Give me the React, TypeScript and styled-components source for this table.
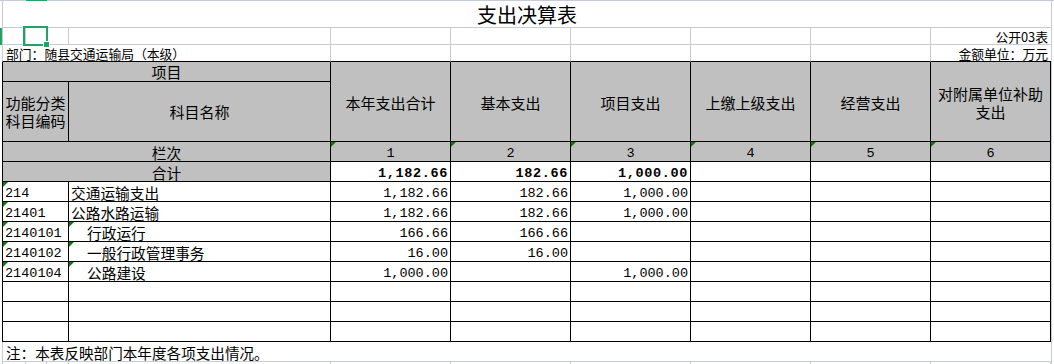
import React from "react";
import styled, { createGlobalStyle, css } from "styled-components";

const GRID = "#c6cbda";
const INK = "#000000";
const HEAD = "#c0c0c0";
const SEL = "#21a366";
const FLAG = "#008000";
const MONO = `"Liberation Mono", "DejaVu Sans Mono", monospace`;
const CJK = `"Noto Sans CJK SC", "Noto Sans", sans-serif`;

const Global = createGlobalStyle`
  html, body { margin: 0; padding: 0; background: #fff; }
  body { font-family: ${CJK}; color: #000; overflow: hidden; }
`;

const Sheet = styled.main`
  display: grid;
  width: 1054px;
  height: 364px;
  grid-template-columns: 2px 24px 21px 22px 262px repeat(6, 120px) 3px;
  grid-template-rows: 1px 27px 17px 17px 20px 60px repeat(10, 20px) 20px 2px;
  background: #fff;
  overflow: hidden;
  font-family: ${CJK};
  color: #000;
`;

type Place = { $c: string; $r: string };

const Slot = styled.div<Place>`
  grid-column: ${(p) => p.$c};
  grid-row: ${(p) => p.$r};
  box-sizing: border-box;
  min-width: 0;
  position: relative;
  display: flex;
  white-space: nowrap;
`;

const EdgeLine = styled(Slot)<{ $active?: boolean }>`
  background: ${(p) => (p.$active ? SEL : GRID)};
`;

const RowMark = styled(Slot)`
  background: ${SEL};
`;

const Gutter = styled(Slot)`
  border-left: 1px solid ${GRID};
`;

const GridCell = styled(Slot)<{ $lead?: boolean; $open?: boolean; $inkBottom?: boolean }>`
  border-bottom: 1px solid ${(p) => (p.$inkBottom ? INK : GRID)};
  border-right: ${(p) => (p.$open ? "none" : `1px solid ${GRID}`)};
  border-left: ${(p) => (p.$lead ? `1px solid ${GRID}` : "none")};
`;

const TitleCell = styled(GridCell)`
  justify-content: center;
  align-items: flex-start;
  padding-top: 2px;
  font-size: 20px;
  line-height: 24px;
`;

const InfoCell = styled(GridCell)<{ $end?: boolean }>`
  justify-content: ${(p) => (p.$end ? "flex-end" : "flex-start")};
  align-items: flex-end;
  padding: 0 3px;
  font-size: 12.8px;
  line-height: 15px;
`;

const SelectedCell = styled(GridCell)`
  z-index: 2;
  &::after {
    content: "";
    position: absolute;
    left: -3px;
    top: -2px;
    right: -2px;
    bottom: -2px;
    border: 2px solid ${SEL};
  }
  &::before {
    content: "";
    position: absolute;
    left: 17px;
    top: 13px;
    width: 5px;
    height: 5px;
    background: ${SEL};
    border: 1px solid #fff;
    z-index: 1;
  }
`;

const TableCell = styled(Slot)<{ $lead?: boolean; $shade?: boolean; $flag?: boolean }>`
  border-right: 1px solid ${INK};
  border-bottom: 1px solid ${INK};
  border-left: ${(p) => (p.$lead ? `1px solid ${INK}` : "none")};
  background: ${(p) => (p.$shade ? HEAD : "#fff")};
  ${(p) =>
    p.$flag &&
    css`
      &::before {
        content: "";
        position: absolute;
        left: 0;
        top: 0;
        border-style: solid;
        border-width: 5px 5px 0 0;
        border-color: ${FLAG} transparent transparent transparent;
      }
    `}
`;

const HeadCell = styled(TableCell)<{ $lift?: number }>`
  background: ${HEAD};
  justify-content: center;
  align-items: center;
  text-align: center;
  padding-top: ${(p) => p.$lift ?? 0}px;
  font-size: 15px;
  line-height: 18px;
  white-space: normal;
`;

const LabelCell = styled(TableCell)`
  background: ${HEAD};
  justify-content: center;
  align-items: flex-end;
  font-size: 14.7px;
  line-height: 17px;
`;

const IndexCell = styled(TableCell)`
  background: ${HEAD};
  justify-content: center;
  align-items: flex-end;
  font-family: ${MONO};
  font-size: 13.5px;
  line-height: 15px;
`;

const AmountCell = styled(TableCell)<{ $bold?: boolean }>`
  justify-content: flex-end;
  align-items: flex-end;
  padding-right: 2px;
  font-family: ${MONO};
  font-size: 13.5px;
  line-height: 15px;
  font-weight: ${(p) => (p.$bold ? 700 : 400)};
  letter-spacing: ${(p) => (p.$bold ? "0.65px" : "0")};
`;

const CodeCell = styled(TableCell)`
  align-items: flex-end;
  padding-left: 2px;
  font-family: ${MONO};
  font-size: 13.5px;
  line-height: 15px;
`;

const NameCell = styled(TableCell)<{ $depth: number }>`
  align-items: flex-end;
  padding-left: ${(p) => 2 + (p.$depth >= 3 ? 16 : 0)}px;
  font-size: 14.7px;
  line-height: 17px;
`;

const NoteCell = styled(GridCell)`
  align-items: flex-end;
  padding-left: 3px;
  font-size: 14.6px;
  line-height: 17px;
`;

const FillerCell = styled(Slot)<{ $lead?: boolean }>`
  border-right: 1px solid ${GRID};
  border-left: ${(p) => (p.$lead ? `1px solid ${GRID}` : "none")};
`;

const amountCols = ["6 / 7", "7 / 8", "8 / 9", "9 / 10", "10 / 11", "11 / 12"];
const gridCols = ["2 / 3", "3 / 4", "4 / 5", "5 / 6", ...amountCols];

const headers: React.ReactNode[] = [
  "本年支出合计",
  "基本支出",
  "项目支出",
  "上缴上级支出",
  "经营支出",
  <>
    对附属单位补助
    <br />
    支出
  </>,
];

type Line = { code: string; name: string; depth: number; values: string[] };

const total = ["1,182.66", "182.66", "1,000.00", "", "", ""];

const lines: Line[] = [
  { code: "214", name: "交通运输支出", depth: 1, values: ["1,182.66", "182.66", "1,000.00", "", "", ""] },
  { code: "21401", name: "公路水路运输", depth: 2, values: ["1,182.66", "182.66", "1,000.00", "", "", ""] },
  { code: "2140101", name: "行政运行", depth: 3, values: ["166.66", "166.66", "", "", "", ""] },
  { code: "2140102", name: "一般行政管理事务", depth: 3, values: ["16.00", "16.00", "", "", "", ""] },
  { code: "2140104", name: "公路建设", depth: 3, values: ["1,000.00", "", "1,000.00", "", "", ""] },
];

const blanks = [14, 15, 16];

export default function App() {
  return (
    <>
      <Global />
      <Sheet>
        {/* sheet chrome edges */}
        <EdgeLine $c="1 / 3" $r="1" />
        <EdgeLine $c="3 / 4" $r="1" $active />
        <EdgeLine $c="4 / -1" $r="1" />
        <RowMark $c="1 / 2" $r="3" />
        <Gutter $c="12 / 13" $r="2 / -1" />

        {/* title */}
        <TitleCell $c="2 / 12" $r="2" $lead $open>
          支出决算表
        </TitleCell>

        {/* row: 公开03表 */}
        <GridCell $c="2 / 3" $r="3" $lead />
        <SelectedCell $c="3 / 4" $r="3" />
        <GridCell $c="4 / 5" $r="3" />
        <GridCell $c="5 / 6" $r="3" />
        {amountCols.slice(0, 5).map((c) => (
          <GridCell key={c} $c={c} $r="3" />
        ))}
        <InfoCell $c="11 / 12" $r="3" $open $end>
          公开03表
        </InfoCell>

        {/* row: 部门 */}
        <InfoCell $c="2 / 6" $r="4" $lead $inkBottom>
          部门：随县交通运输局（本级）
        </InfoCell>
        {amountCols.slice(0, 5).map((c) => (
          <GridCell key={c} $c={c} $r="4" $inkBottom />
        ))}
        <InfoCell $c="11 / 12" $r="4" $open $end $inkBottom>
          金额单位：万元
        </InfoCell>

        {/* header */}
        <HeadCell $c="2 / 6" $r="5" $lead>
          项目
        </HeadCell>
        <HeadCell $c="2 / 5" $r="6" $lead>
          功能分类
          <br />
          科目编码
        </HeadCell>
        <HeadCell $c="5 / 6" $r="6">
          科目名称
        </HeadCell>
        {headers.map((h, i) => (
          <HeadCell key={i} $c={amountCols[i]} $r="5 / 7" $lift={2}>
            <span>{h}</span>
          </HeadCell>
        ))}

        {/* 栏次 */}
        <LabelCell $c="2 / 6" $r="7" $lead>
          栏次
        </LabelCell>
        {amountCols.map((c, i) => (
          <IndexCell key={c} $c={c} $r="7" $flag>
            {i + 1}
          </IndexCell>
        ))}

        {/* 合计 */}
        <LabelCell $c="2 / 6" $r="8" $lead>
          合计
        </LabelCell>
        {amountCols.map((c, i) => (
          <AmountCell key={c} $c={c} $r="8" $bold>
            {total[i]}
          </AmountCell>
        ))}

        {/* data rows */}
        {lines.map((line, k) => {
          const r = String(9 + k);
          return (
            <React.Fragment key={line.code}>
              <CodeCell $c="2 / 5" $r={r} $lead $flag>
                {line.code}
              </CodeCell>
              <NameCell $c="5 / 6" $r={r} $depth={line.depth} $flag={line.depth >= 3}>
                {line.name}
              </NameCell>
              {amountCols.map((c, i) => (
                <AmountCell key={c} $c={c} $r={r}>
                  {line.values[i]}
                </AmountCell>
              ))}
            </React.Fragment>
          );
        })}

        {/* empty rows */}
        {blanks.map((n) => (
          <React.Fragment key={n}>
            <CodeCell $c="2 / 5" $r={String(n)} $lead />
            <NameCell $c="5 / 6" $r={String(n)} $depth={1} />
            {amountCols.map((c) => (
              <AmountCell key={c} $c={c} $r={String(n)} />
            ))}
          </React.Fragment>
        ))}

        {/* note */}
        <NoteCell $c="2 / 12" $r="17" $lead $open>
          注：本表反映部门本年度各项支出情况。
        </NoteCell>

        {/* filler grid */}
        {gridCols.map((c, i) => (
          <FillerCell key={c} $c={c} $r="18" $lead={i === 0} />
        ))}
      </Sheet>
    </>
  );
}
